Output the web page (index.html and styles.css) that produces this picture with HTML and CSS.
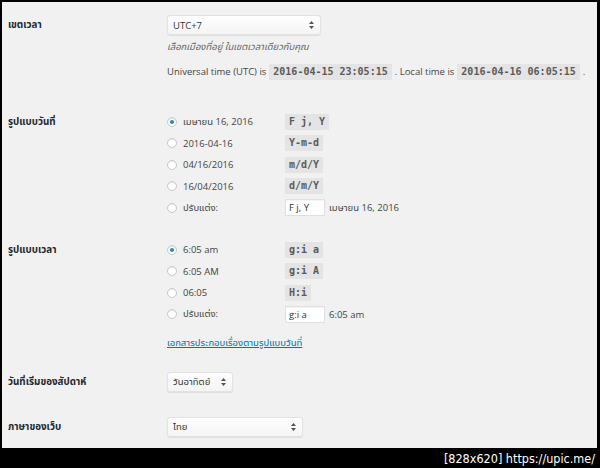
FILE: index.html
```html
<!DOCTYPE html>
<html lang="th">
<head>
    <meta charset="UTF-8">
    <meta name="viewport" content="width=device-width, initial-scale=1.0">
    <title>ตั้งค่าทั่วไป</title>
    <link rel="stylesheet" href="styles.css">
</head>
<body>
    <div class="screen">
        <!-- Timezone -->
        <div class="row row-tz">
            <div class="label label-select">เขตเวลา</div>
            <div class="field">
                <div class="select select-tz">
                    <span>UTC+7</span>
                    <svg class="arrows" width="5" height="8" viewBox="0 0 5 8"><path d="M2.5 0L5 3H0z M2.5 8L0 5h5z" fill="#555"/></svg>
                </div>
                <p class="description">เลือกเมืองที่อยู่ ในเขตเวลาเดียวกับคุณ</p>
                <p class="timestamps">
                    <span>Universal time (UTC) is</span>
                    <code>2016-04-15 23:05:15</code>
                    <span>. Local time is</span>
                    <code>2016-04-16 06:05:15</code>
                    <span>.</span>
                </p>
            </div>
        </div>

        <!-- Date format -->
        <div class="row row-date">
            <div class="label label-radio">รูปแบบวันที่</div>
            <div class="field options">
                <label class="option"><span class="radio checked"></span><span class="option-text">เมษายน 16, 2016</span></label>
                <code>F j, Y</code>
                <label class="option"><span class="radio"></span><span class="option-text">2016-04-16</span></label>
                <code>Y-m-d</code>
                <label class="option"><span class="radio"></span><span class="option-text">04/16/2016</span></label>
                <code>m/d/Y</code>
                <label class="option"><span class="radio"></span><span class="option-text">16/04/2016</span></label>
                <code>d/m/Y</code>
                <label class="option"><span class="radio"></span><span class="option-text">ปรับแต่ง:</span></label>
                <div class="custom"><span class="text-input">F j, Y</span><span class="example">เมษายน 16, 2016</span></div>
            </div>
        </div>

        <!-- Time format -->
        <div class="row row-time">
            <div class="label label-radio">รูปแบบเวลา</div>
            <div class="field">
                <div class="options">
                    <label class="option"><span class="radio checked"></span><span class="option-text">6:05 am</span></label>
                    <code>g:i a</code>
                    <label class="option"><span class="radio"></span><span class="option-text">6:05 AM</span></label>
                    <code>g:i A</code>
                    <label class="option"><span class="radio"></span><span class="option-text">06:05</span></label>
                    <code>H:i</code>
                    <label class="option"><span class="radio"></span><span class="option-text">ปรับแต่ง:</span></label>
                    <div class="custom"><span class="text-input">g:i a</span><span class="example">6:05 am</span></div>
                </div>
                <a class="doc-link" href="#">เอกสารประกอบเรื่องตามรูปแบบวันที่</a>
            </div>
        </div>

        <!-- Week starts on -->
        <div class="row row-week">
            <div class="label label-select">วันที่เริ่มของสัปดาห์</div>
            <div class="field">
                <div class="select select-week">
                    <span>วันอาทิตย์</span>
                    <svg class="arrows" width="5" height="8" viewBox="0 0 5 8"><path d="M2.5 0L5 3H0z M2.5 8L0 5h5z" fill="#555"/></svg>
                </div>
            </div>
        </div>

        <!-- Site language -->
        <div class="row row-lang">
            <div class="label label-select">ภาษาของเว็บ</div>
            <div class="field">
                <div class="select select-lang">
                    <span>ไทย</span>
                    <svg class="arrows" width="5" height="8" viewBox="0 0 5 8"><path d="M2.5 0L5 3H0z M2.5 8L0 5h5z" fill="#555"/></svg>
                </div>
            </div>
        </div>
    </div>
    <div class="watermark"><span>[828x620]</span> <span>https://upic.me/</span></div>
</body>
</html>
```

FILE: styles.css
```css
html, body {
    margin: 0;
    padding: 0;
}
body {
    background-color: #000;
    width: 600px;
    height: 468px;
    overflow: hidden;
    font-family: "Open Sans", "Noto Sans Thai", "Noto Sans", "DejaVu Sans", sans-serif;
    font-size: 9.5px;
    color: #444;
}
.screen {
    box-sizing: border-box;
    margin: 2px 0 0 2px;
    width: 595px;
    height: 446px;
    background-color: #f1f1f1;
    padding: 13px 0 0 6px;
}
.row {
    display: grid;
    grid-template-columns: 159px 1fr;
}
.label {
    font-weight: bold;
    font-size: 9.8px;
    color: #23282d;
}
.label-select {
    line-height: 20px;
}
.label-radio {
    line-height: 21.5px;
}
.field p {
    margin: 0;
}

/* select boxes */
.select {
    box-sizing: border-box;
    height: 20px;
    display: flex;
    align-items: center;
    justify-content: space-between;
    padding: 0 6px 0 5px;
    background: linear-gradient(#fefefe, #f4f4f4);
    border: 1px solid #e2e2e2;
    border-radius: 3px;
    box-shadow: 0 1px 1px rgba(0,0,0,0.08);
    color: #333;
}
.select-tz {
    width: 154px;
}
.select-week {
    width: 66px;
}
.select-lang {
    width: 136px;
}

.description {
    margin-top: 5px !important;
    line-height: 14px;
    font-style: italic;
    color: #666;
}
.timestamps {
    margin-top: 10px !important;
    display: flex;
    align-items: center;
    gap: 3px;
    line-height: 16px;
}
code {
    font-family: "DejaVu Sans Mono", "Liberation Mono", monospace;
    font-size: 10px;
    font-weight: bold;
    color: #5a5a5a;
    background-color: #e4e4e4;
    padding: 1px 4px;
    line-height: 14px;
}

/* radio lists */
.row-date {
    margin-top: 31px;
}
.row-time {
    margin-top: 20.5px;
}
.options {
    display: grid;
    grid-template-columns: 118px auto;
    grid-auto-rows: 21.5px;
    align-items: center;
    justify-items: start;
}
.option {
    display: flex;
    align-items: center;
}
.radio {
    box-sizing: border-box;
    width: 10px;
    height: 10px;
    border-radius: 50%;
    border: 1px solid #c4c8cc;
    background-color: #fff;
    box-shadow: inset 0 1px 1px rgba(0,0,0,0.08);
    margin-right: 6px;
    display: flex;
    align-items: center;
    justify-content: center;
}
.radio.checked::after {
    content: "";
    width: 4px;
    height: 4px;
    border-radius: 50%;
    background-color: #1e8cbe;
}
.custom {
    display: flex;
    align-items: center;
    gap: 4px;
}
.text-input {
    box-sizing: border-box;
    width: 40px;
    height: 17px;
    line-height: 15px;
    padding: 0 3px;
    background-color: #fff;
    border: 1px solid #e0e0e0;
    box-shadow: inset 0 1px 1px rgba(0,0,0,0.05);
    color: #333;
}
.doc-link {
    display: inline-block;
    margin-top: 11px;
    line-height: 14px;
    color: #0073aa;
    text-decoration: underline;
}

.row-week {
    margin-top: 22px;
}
.row-lang {
    margin-top: 25px;
}

.watermark {
    margin-top: 2px;
    padding-right: 5px;
    text-align: right;
    color: #fff;
    font-family: "DejaVu Sans Condensed", "DejaVu Sans", sans-serif;
    font-size: 12.5px;
    line-height: 18px;
}
```
